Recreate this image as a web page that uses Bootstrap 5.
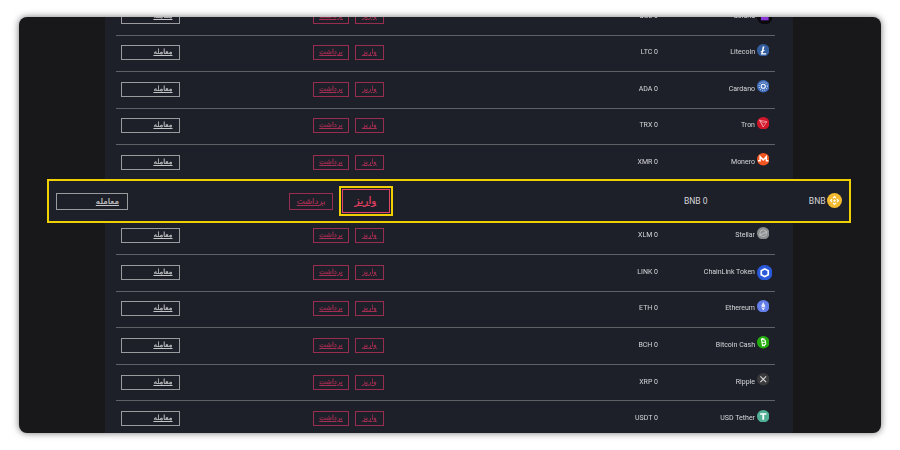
<!DOCTYPE html>
<html lang="fa">
<head>
<meta charset="utf-8">
<title>Wallet</title>
<link href="https://cdn.jsdelivr.net/npm/bootstrap@5.3.0/dist/css/bootstrap.min.css" rel="stylesheet">
<style>
html,body{background:#fff;margin:0;height:450px;overflow:hidden}
.shot{width:862px;height:416px;margin:17px 0 0 19px;background:#18181b;border-radius:8px;box-shadow:0 0 7px rgba(0,0,0,.55);overflow:hidden;position:relative;filter:blur(.3px)}
.panel{display:flow-root;width:687.5px;height:100%;margin-left:86px;background:#1e2029;padding:0 18px 0 11px}
.coins{margin-top:-19.1px}
.coin-row{height:36.6px;border-top:1.3px solid #606166;padding-top:9.7px;font-family:Roboto,"Noto Sans",sans-serif;font-size:7px;line-height:15px;color:#d6d7da}
.coin-row .t-btn,.coin-row .w-btn,.coin-row .d-btn{height:15px;font:7px/13px "DejaVu Sans",sans-serif;-webkit-text-stroke:.2px;text-decoration:underline;border-radius:0;padding:0;box-sizing:border-box}
.coin-row .t-btn{display:block;width:59px;margin-left:5px;border:1px solid #9a9b9f;color:#c4c5c7;text-align:right;padding-right:6.5px}
.w-btn,.d-btn{display:block;border:1px solid #992d50;color:#a62e53;text-align:center}
.w-btn{width:36px}
.d-btn{width:29px}
.act{margin-left:133px;gap:6px}
.amt{width:274px;text-align:right}
.nm{width:97px;text-align:right}
.ico{width:12.5px;height:12.5px;margin:-1.5px 0 0 1.5px;flex:none;display:block}
.ico-lg{width:15.5px;height:15.5px;margin-top:0}
.feature{position:absolute;left:27.5px;top:162px;width:804px;height:44px;background:#1e2029;border:2px solid #f0d000;font-family:Roboto,"Noto Sans",sans-serif;font-size:8.5px;color:#d6d7da;padding-left:7.5px}
.f-t,.f-w{height:17px;font:8.5px/15px "DejaVu Sans",sans-serif;-webkit-text-stroke:.2px;text-decoration:underline;box-sizing:border-box;display:block}
.f-t{width:72px;border:1px solid #9a9b9f;color:#c4c5c7;text-align:right;padding-right:8px}
.f-w{width:44px;margin-left:161px;border:1px solid #992d50;color:#a62e53;text-align:center}
.f-box{margin-left:5.5px;border:2px solid #f0d000;padding:1px;width:54px;height:29.5px;box-sizing:border-box}
.f-d{display:block;height:100%;border:1px solid #e0456a;color:#e03f62;font:10.5px/21px "DejaVu Sans",sans-serif;-webkit-text-stroke:.2px;text-decoration:underline;text-align:center}
.f-amt{width:315px;text-align:right}
.f-nm{width:118px;text-align:right}
.f-ico{width:15px;height:15px;margin:-2px 0 0 1.5px;flex:none;display:block}
</style>
</head>
<body>
<div class="shot">
  <div class="panel">
    <div class="coins">
      <div class="coin-row d-flex"><a class="t-btn" dir="rtl">معامله</a><div class="act d-flex"><a class="w-btn" dir="rtl">برداشت</a><a class="d-btn" dir="rtl">واریز</a></div><div class="amt">SOL 0</div><div class="nm">Solana</div><svg class="ico ico-lg" viewBox="0 0 24 24"><circle cx="12" cy="12" r="12" fill="#0b0b0f"/><rect x="6" y="6" width="12" height="11.5" fill="#8a35d8"/></svg></div>

      <div class="coin-row d-flex"><a class="t-btn" dir="rtl">معامله</a><div class="act d-flex"><a class="w-btn" dir="rtl">برداشت</a><a class="d-btn" dir="rtl">واریز</a></div><div class="amt">LTC 0</div><div class="nm">Litecoin</div><svg class="ico" viewBox="0 0 24 24"><circle cx="12" cy="12" r="12" fill="#345d9d"/><path d="M11 5h3.400l-2 7.200 2.400-.9-.6 2-2.400.9-1 3.600h7.200l-.7 2.400H7.400l1.500-5.200-2 .8.5-1.900 2.100-.8z" fill="#fff"/></svg></div>

      <div class="coin-row d-flex"><a class="t-btn" dir="rtl">معامله</a><div class="act d-flex"><a class="w-btn" dir="rtl">برداشت</a><a class="d-btn" dir="rtl">واریز</a></div><div class="amt">ADA 0</div><div class="nm">Cardano</div><svg class="ico" viewBox="0 0 24 24"><circle cx="12" cy="12" r="12" fill="#3f6cba"/><circle cx="12" cy="12" r="4" fill="none" stroke="#fff" stroke-width="2"/><circle cx="12" cy="12" r="8" fill="none" stroke="#dfe7f5" stroke-width="2" stroke-dasharray="1.6 2.6"/></svg></div>

      <div class="coin-row d-flex"><a class="t-btn" dir="rtl">معامله</a><div class="act d-flex"><a class="w-btn" dir="rtl">برداشت</a><a class="d-btn" dir="rtl">واریز</a></div><div class="amt">TRX 0</div><div class="nm">Tron</div><svg class="ico" viewBox="0 0 24 24"><circle cx="12" cy="12" r="12" fill="#d2172a"/><path d="M5 6l14 3-7 10zM5 6l7 13M12 11l7-2M5 6l7 5" fill="none" stroke="#f3a6ad" stroke-width="1.4" stroke-linejoin="round"/></svg></div>

      <div class="coin-row d-flex"><a class="t-btn" dir="rtl">معامله</a><div class="act d-flex"><a class="w-btn" dir="rtl">برداشت</a><a class="d-btn" dir="rtl">واریز</a></div><div class="amt">XMR 0</div><div class="nm">Monero</div><svg class="ico" viewBox="0 0 24 24"><circle cx="12" cy="12" r="12" fill="#f2551f"/><path d="M2 15h4V7l6 6.500L18 7v8h4" fill="none" stroke="#fff" stroke-width="2.800"/></svg></div>

      <div class="coin-row"></div>

      <div class="coin-row d-flex"><a class="t-btn" dir="rtl">معامله</a><div class="act d-flex"><a class="w-btn" dir="rtl">برداشت</a><a class="d-btn" dir="rtl">واریز</a></div><div class="amt">XLM 0</div><div class="nm">Stellar</div><svg class="ico" viewBox="0 0 24 24"><circle cx="12" cy="12" r="12" fill="#8b8c8e"/><circle cx="12" cy="12" r="6.500" fill="none" stroke="#c4c5c7" stroke-width="1.600"/><path d="M4 15L20 8M4 17L20 10" stroke="#c4c5c7" stroke-width="1.300"/></svg></div>

      <div class="coin-row d-flex"><a class="t-btn" dir="rtl">معامله</a><div class="act d-flex"><a class="w-btn" dir="rtl">برداشت</a><a class="d-btn" dir="rtl">واریز</a></div><div class="amt">LINK 0</div><div class="nm">ChainLink Token</div><svg class="ico ico-lg" viewBox="0 0 24 24"><circle cx="12" cy="12" r="12" fill="#2a5ada"/><path d="M12 6l5.400 3v6L12 18l-5.400-3V9z" fill="none" stroke="#fff" stroke-width="2.600"/></svg></div>

      <div class="coin-row d-flex"><a class="t-btn" dir="rtl">معامله</a><div class="act d-flex"><a class="w-btn" dir="rtl">برداشت</a><a class="d-btn" dir="rtl">واریز</a></div><div class="amt">ETH 0</div><div class="nm">Ethereum</div><svg class="ico" viewBox="0 0 24 24"><circle cx="12" cy="12" r="12" fill="#627eea"/><path d="M12 4l-4.200 8L12 14.500 16.200 12zM12 15.800L7.800 13.400 12 20l4.200-6.600z" fill="#e8ecfc"/></svg></div>

      <div class="coin-row d-flex"><a class="t-btn" dir="rtl">معامله</a><div class="act d-flex"><a class="w-btn" dir="rtl">برداشت</a><a class="d-btn" dir="rtl">واریز</a></div><div class="amt">BCH 0</div><div class="nm">Bitcoin Cash</div><svg class="ico" viewBox="0 0 24 24"><circle cx="12" cy="12" r="12" fill="#22ad0c"/><path d="M8.500 6l6 1.600c2.200.6 2.500 3.400.4 4.300 2.700.5 2.800 4-.2 4.700L10.500 18zM10 4l1 2M13 4l.6 2.600M11 18l.5 2M14 17.500l.6 2.200M10.200 11.800l4.700 .1" fill="none" stroke="#fff" stroke-width="2"/></svg></div>

      <div class="coin-row d-flex"><a class="t-btn" dir="rtl">معامله</a><div class="act d-flex"><a class="w-btn" dir="rtl">برداشت</a><a class="d-btn" dir="rtl">واریز</a></div><div class="amt">XRP 0</div><div class="nm">Ripple</div><svg class="ico" viewBox="0 0 24 24"><circle cx="12" cy="12" r="12" fill="#3a3a3d"/><path d="M6.500 6.500L17.500 17.500M17.500 6.500L6.500 17.500" fill="none" stroke="#d8d8d8" stroke-width="2.200"/></svg></div>

      <div class="coin-row d-flex"><a class="t-btn" dir="rtl">معامله</a><div class="act d-flex"><a class="w-btn" dir="rtl">برداشت</a><a class="d-btn" dir="rtl">واریز</a></div><div class="amt">USDT 0</div><div class="nm">USD Tether</div><svg class="ico" viewBox="0 0 24 24"><circle cx="12" cy="12" r="12" fill="#50af95"/><path d="M6 6h12v3h-4.300v9.500h-3.400V9H6z" fill="#fff"/></svg></div>
    </div>
  </div>
  <div class="feature d-flex align-items-center">
    <a class="f-t" dir="rtl">معامله</a>
    <a class="f-w" dir="rtl">برداشت</a>
    <div class="f-box"><a class="f-d" dir="rtl">واریز</a></div>
    <div class="f-amt">BNB 0</div>
    <div class="f-nm">BNB</div>
    <svg class="f-ico" viewBox="0 0 24 24"><circle cx="12" cy="12" r="12" fill="#f3ba2f"/><path d="M12 4.500l3 3-1.300 1.300L12 7.100l-1.700 1.700L9 7.500zM7.500 9l1.300 1.300L7.100 12l1.700 1.700L7.500 15l-3-3zM16.500 9l3 3-3 3-1.300-1.300 1.700-1.700-1.700-1.700zM12 9.800l2.200 2.200-2.200 2.200L9.800 12zM9 16.500l1.300-1.300 1.700 1.700 1.700-1.700 1.300 1.300-3 3z" fill="#fff"/></svg>
  </div>
</div>
<script src="https://cdn.jsdelivr.net/npm/bootstrap@5.3.0/dist/js/bootstrap.bundle.min.js"></script>
</body>
</html>
